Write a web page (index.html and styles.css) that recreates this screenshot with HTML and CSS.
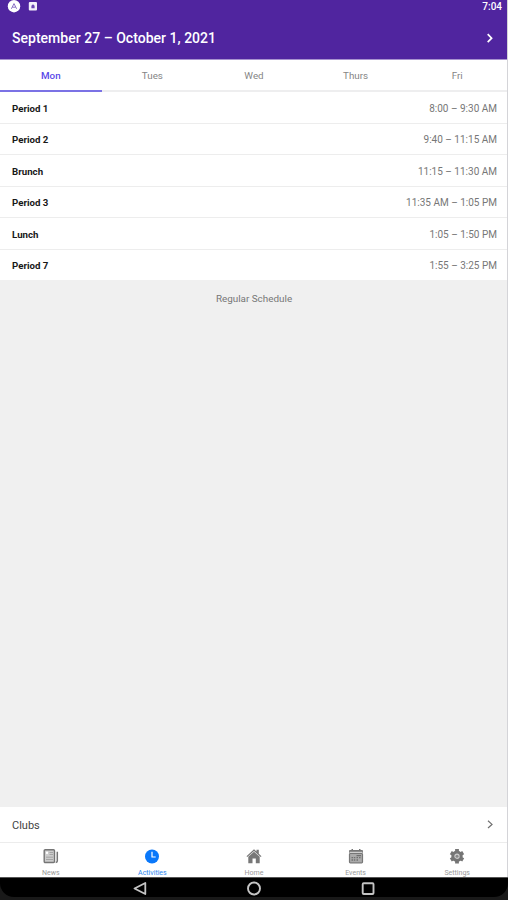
FILE: index.html
```
<!DOCTYPE html>
<html lang="en">
<head>
<meta charset="utf-8">
<title>Schedule</title>
<link rel="stylesheet" href="styles.css">
</head>
<body>
<div class="screen">
  <header class="top">
    <div class="status">
      <svg class="status-icons" width="40" height="14" viewBox="0 0 40 14">
        <circle cx="14" cy="6.200" r="6.200" fill="#fff"/>
        <path d="M11.400 8.800 14 3.600l2.600 5.200M12.400 7.200h3.200" fill="none" stroke="#8a70c4" stroke-width="1"/>
        <rect x="28.800" y="2" width="8.200" height="8.600" rx="1" fill="#f3effa"/>
        <path d="M31.400 8.200V5.800L33 4.200l1.600 1.600v2.400z" fill="#6b46b4"/>
      </svg>
      <span class="clock">7:04</span>
    </div>
    <div class="title-row">
      <h1>September 27 – October 1, 2021</h1>
      <svg width="8" height="12" viewBox="0 0 8 12"><path d="M1.700 2.200 5.600 6.200 1.700 10.200" fill="none" stroke="#fff" stroke-width="1.700"/></svg>
    </div>
  </header>
  <nav class="tabs">
    <span class="tab active">Mon</span><span class="tab">Tues</span><span class="tab">Wed</span><span class="tab">Thurs</span><span class="tab">Fri</span>
  </nav>
  <main>
    <ul class="periods">
      <li><b>Period 1</b><span>8:00 – 9:30 AM</span></li>
      <li><b>Period 2</b><span>9:40 – 11:15 AM</span></li>
      <li><b>Brunch</b><span>11:15 – 11:30 AM</span></li>
      <li><b>Period 3</b><span>11:35 AM – 1:05 PM</span></li>
      <li><b>Lunch</b><span>1:05 – 1:50 PM</span></li>
      <li><b>Period 7</b><span>1:55 – 3:25 PM</span></li>
    </ul>
    <p class="note">Regular Schedule</p>
  </main>
  <div class="clubs">
    <span>Clubs</span>
    <svg width="8" height="10" viewBox="0 0 8 10"><path d="M2 .8 6 4.400 2 8" fill="none" stroke="#6f6f6f" stroke-width="1.200"/></svg>
  </div>
  <nav class="bottom">
    <div class="item">
      <svg width="16" height="16" viewBox="0 0 16 16" fill="none" stroke="#757575"><rect x="1.200" y="1.700" width="10.300" height="12.800" rx="1" fill="#ccc" stroke-width="1.400"/><path d="M14.300 3.800v9.200q0 1.200-1.600 1.500" stroke-width="1.500"/><path d="M6.500 4.500H10M6.500 6.500H10M3 9.200h7M3 11.500h7" stroke="#999" stroke-width=".8"/><rect x="3" y="3.700" width="2" height="2.200" fill="#fff" stroke="none"/></svg>
      <span>News</span>
    </div>
    <div class="item active">
      <svg width="16" height="16" viewBox="0 0 16 16"><circle cx="8" cy="8.500" r="7" fill="#0a78fa"/><path d="M8 3.700v5.300h3.700" fill="none" stroke="#fff" stroke-width="1.200"/></svg>
      <span>Activities</span>
    </div>
    <div class="item">
      <svg width="16" height="16" viewBox="0 0 16 16"><path d="M.5 8.200 8 1.200l2.500 2.300V1.700h2.300v4L15.500 8.200l-.8.700L8 3.100 1.300 8.900zM2.300 8.700 8 3.800l5.700 4.900v6.500H9.800V10.500H6.500v4.700H2.300z" fill="#777"/></svg>
      <span>Home</span>
    </div>
    <div class="item">
      <svg width="16" height="16" viewBox="0 0 16 16"><path d="M1.700 2h1.800V1H5v1h6V1h1.500v1h1.800l.7.700v2.300H1V2.700z" fill="#777"/><rect x="1.500" y="5.500" width="13" height="9.300" rx=".8" fill="#aaa" stroke="#777" stroke-width="1.200"/><path d="M8.500 7.700h4.500M3.500 9.700h1.500M5.800 9.700h1.500M8.500 9.700h1.500M11 9.700h1.500M3.500 12h1.500M5.800 12h1.500M8.500 12h1.500" stroke="#707070" stroke-width="1.300"/><path d="M1.500 4.300h13" stroke="#e5e5e5" stroke-width="1"/></svg>
      <span>Events</span>
    </div>
    <div class="item">
      <svg width="16" height="16" viewBox="0 0 16 16"><circle cx="8" cy="8.200" r="4.200" fill="#ccc" stroke="#757575" stroke-width="3"/><path d="M8 1v3M8 12.400v3M1.800 4.600l2.600 1.500M11.600 10.300l2.600 1.500M1.800 11.800l2.600-1.500M11.600 6.100l2.600-1.500" stroke="#757575" stroke-width="3.800"/><circle cx="8" cy="8.200" r="1.500" fill="#888"/></svg>
      <span>Settings</span>
    </div>
  </nav>
  <footer class="system">
    <div class="keys">
      <svg width="16" height="16" viewBox="0 0 16 16"><path d="M2.500 7.500 13.300 2v11z" fill="none" stroke="#c4c4c4" stroke-width="1.800" stroke-linejoin="round"/></svg>
      <svg width="16" height="16" viewBox="0 0 16 16"><circle cx="8" cy="7.500" r="6" fill="none" stroke="#c4c4c4" stroke-width="1.900"/></svg>
      <svg width="16" height="16" viewBox="0 0 16 16"><rect x="2.700" y="2.200" width="10.800" height="10.800" rx="1" fill="none" stroke="#c4c4c4" stroke-width="1.900"/></svg>
    </div>
  </footer>
</div>
</body>
</html>
```
FILE: styles.css
```
* { box-sizing: border-box; }
body { margin: 0; font-family: Roboto, "Liberation Sans", sans-serif; }
svg { display: block; flex: none; }
.screen { width: 508px; height: 900px; display: flex; flex-direction: column; overflow: hidden; background: #f0f0f0; box-shadow: none; position: relative; }
.screen::after { content: ""; position: absolute; top: 0; right: 0; width: 1px; height: 877px; background: #d4d4d8; }
.top { height: 60px; flex: none; background: #50259f; border-bottom: 1px solid #a893cf; }
.status { height: 14px; display: flex; justify-content: space-between; padding-right: 6px; color: #fff; }
.clock { font-size: 10px; line-height: 14px; font-weight: 500; }
.title-row { display: flex; align-items: center; justify-content: space-between; height: 47px; padding: 0 14px 0 12px; color: #fff; }
h1 { margin: 0; font-size: 14px; font-weight: 500; line-height: 18px; letter-spacing: .02px; white-space: nowrap; }
.tabs { height: 32px; flex: none; display: flex; background: #fff; border-bottom: 2px solid #eeeeef; }
.tab { flex: 1; height: 32px; text-align: center; font-size: 9.8px; line-height: 32px; color: #858585; }
.tab.active { color: #5948e8; font-weight: 500; border-bottom: 2px solid #7b72e5; }
main { flex: 1; min-height: 0; }
.periods { margin: 0; padding: 0; list-style: none; height: 188px; display: flex; flex-direction: column; background: #fff; }
.periods li { flex: 1; display: flex; align-items: center; justify-content: space-between; padding: 2px 11px 0 12px; border-bottom: 1px solid #ededed; font-size: 10px; color: #777; }
.periods li:last-child { border-bottom: 0; }
.periods b { font-size: 9.7px; font-weight: 700; color: #181818; }
.note { margin: 12px 0 0; text-align: center; font-size: 9.9px; line-height: 14px; color: #777; }
.clubs { height: 36px; flex: none; display: flex; align-items: center; justify-content: space-between; padding: 1px 14px 0 12px; background: #fff; border-bottom: 1px solid #ececec; font-size: 11px; color: #444; }
.bottom { height: 34px; flex: none; display: flex; overflow: hidden; background: #fff; }
.item { flex: 1; display: flex; flex-direction: column; align-items: center; padding-top: 5px; font-size: 7px; line-height: 9px; color: #999; }
.item span { margin-top: 5px; }
.item.active { color: #2c87ef; }
.system { height: 23px; flex: none; background: #191919; border-top: 1px solid #555; }
.keys { height: 19px; display: flex; align-items: center; justify-content: center; gap: 98px; padding-top: 2px; background: #000; border-radius: 0 0 14px 14px; }
```
